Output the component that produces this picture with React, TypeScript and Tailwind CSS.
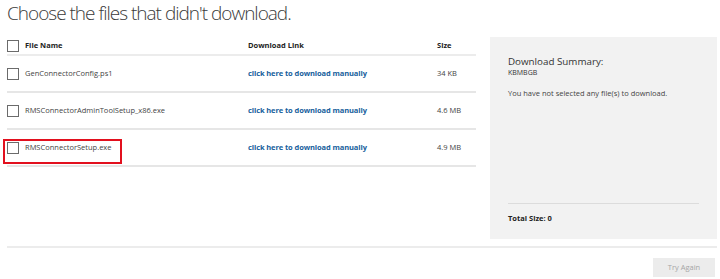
const files = [
  { name: "GenConnectorConfig.ps1", size: "34 KB" },
  { name: "RMSConnectorAdminToolSetup_x86.exe", size: "4.6 MB" },
  { name: "RMSConnectorSetup.exe", size: "4.9 MB", marked: true },
];

function Box() {
  return <div className="w-[12px] h-[12px] border border-[#6b6b6b] bg-white shrink-0" />;
}

export default function App() {
  return (
    <div className="w-[720px] h-[279px] bg-white overflow-hidden font-['Open_Sans',sans-serif] text-[#333]">
      <h1 className="pl-[7px] pt-[1px] text-[19px] leading-[24px] font-light tracking-[-1px] text-[#3a3a3a]">
        Choose the files that didn't download.
      </h1>

      <div className="flex pl-[7px] mt-[12px] h-[209px]">
        {/* file table */}
        <div className="w-[469px]">
          <div className="grid grid-cols-[241px_189px_1fr] items-center h-[19px] border-b-2 border-[#ececec] text-[7.5px] font-bold text-[#222]">
            <div className="flex items-center gap-[6px]">
              <Box />
              <span>File Name</span>
            </div>
            <span>Download Link</span>
            <span>Size</span>
          </div>
          {files.map((f) => (
            <div
              key={f.name}
              className="relative grid grid-cols-[241px_189px_1fr] items-center h-[37px] border-b-2 border-[#e6e6e6] text-[7.5px]"
            >
              <div className="flex items-center gap-[6px] text-[#444]">
                <Box />
                <span>{f.name}</span>
              </div>
              <a className="font-bold text-[#16609c] tracking-[-0.1px]">click here to download manually</a>
              <span className="text-[#444]">{f.size}</span>
              {f.marked && (
                <div className="absolute left-[-4px] top-[9px] w-[119px] h-[25px] border-2 border-[#e2101e]" />
              )}
            </div>
          ))}
        </div>

        {/* summary panel */}
        <div className="ml-[14px] w-[227px] h-[202px] bg-[#f2f2f2] flex flex-col px-[18px] pt-[19px] pb-[15px]">
          <div className="text-[9.8px] leading-[12px] text-[#333]">Download Summary:</div>
          <div className="text-[7px] leading-[9px] text-[#333]">KBMBGB</div>
          <div className="mt-[11px] text-[7.5px] leading-[10px] text-[#444]">
            You have not selected any file(s) to download.
          </div>
          <div className="mt-auto border-t border-[#dcdcdc] pt-[9px] text-[7.5px] font-bold text-[#222]">
            Total Size: 0
          </div>
        </div>
      </div>

      <div className="mx-[7px] w-[710px] h-[2px] bg-[#ececec]" />

      <div className="flex justify-end pr-[5px] mt-[10px]">
        <button className="w-[62px] h-[19px] bg-[#ececec] text-[7.5px] text-[#a6a6a6]">Try Again</button>
      </div>
    </div>
  );
}
